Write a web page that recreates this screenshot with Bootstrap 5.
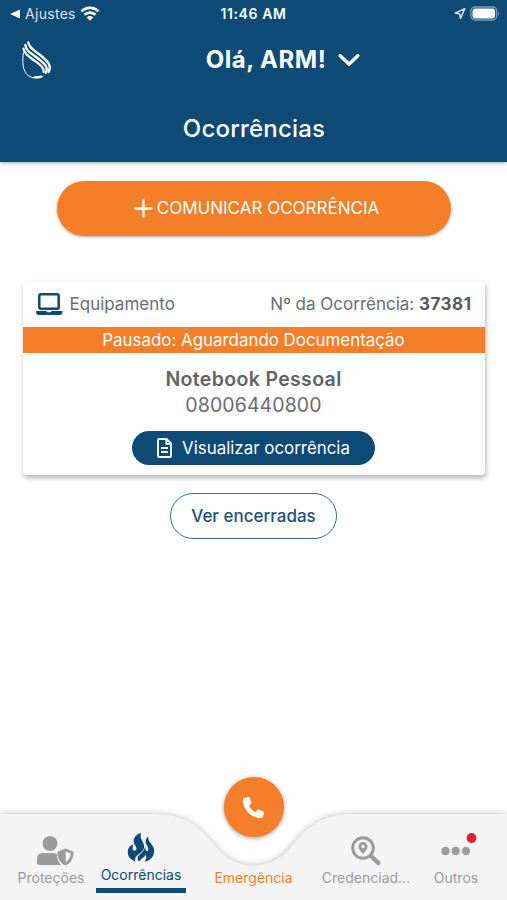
<!DOCTYPE html>
<html lang="pt-BR">
<head>
<meta charset="utf-8">
<meta name="viewport" content="width=device-width, initial-scale=1">
<title>Ocorrências</title>
<link href="https://cdn.jsdelivr.net/npm/bootstrap@5.3.0/dist/css/bootstrap.min.css" rel="stylesheet">
<style>
:root{--navy:#0d4a75;--orange:#f57f29}
body{font-family:Inter,"Liberation Sans",sans-serif;height:900px;overflow:hidden;background:#fff;color:#6b6c70}
svg{display:block;flex:none;overflow:visible}
.t{white-space:nowrap;line-height:1}
.app-header{height:162px;background:var(--navy);box-shadow:0 1px 4px rgba(0,0,0,.35)}
.status{height:28px;padding:0 7px 0 10px}
.status>div{flex:1 1 0}
.s-back{font-size:14px;letter-spacing:.3px;margin-left:5px;margin-right:4px;color:#dbe6ee}
.s-time{font-size:14px;font-weight:600;letter-spacing:.6px;margin:0 3px 0 0}
.hello-row{height:64px;padding:0 22px}
.hello-box{padding-left:29px}
.hello{font-size:24px;font-weight:700;letter-spacing:.5px}
.page-title{height:70px;font-size:24px;font-weight:500;letter-spacing:.2px;padding:3px 0 0 1px}
.btn-report{width:394px;height:55px;margin-top:19px;background:var(--orange);color:#fff;font-size:17px;box-shadow:0 1px 3px rgba(0,0,0,.35);border:0;padding:0 0 0 6px}
.claim{width:462px;height:194px;margin-top:45px;border:0;border-radius:4px;box-shadow:1px 3px 5px rgba(0,0,0,.3)}
.claim-head{height:46px;padding:0 13px 0 12px;font-size:17px}
.claim-type{padding-left:6px}
.claim-num{color:#58595d;letter-spacing:.5px}
.claim-status{height:26px;background:var(--orange);color:#fff;font-size:16.9px}
.claim-name{font-size:19.5px;font-weight:600;letter-spacing:.35px;color:#626366;margin-top:17px}
.claim-phone{font-size:19.5px;letter-spacing:.1px;margin-top:6px}
.btn-view{width:243px;height:34px;margin-top:16px;background:var(--navy);color:#fff;font-size:16.9px;border:0;padding:0;gap:10px}
.btn-closed{width:167px;height:46px;margin-top:18px;border:1.5px solid #316a91;color:#1b527c;font-size:17px;font-weight:500;padding:0}
.tabs{height:126px}
.tabs-bg{position:absolute;left:0;top:0}
.tab-row{position:absolute;left:0;right:0;top:0;bottom:0;padding:0 6px}
.tab{width:90px;padding-top:60px;color:#9b9b9b;font-size:14px}
.tab-mid{width:135px;padding-top:3px;color:var(--orange)}
.tab-on{padding-top:57px;color:var(--navy)}
.tab-on::after{content:"";width:90px;height:5px;background:var(--navy);margin-top:6px}
.tab-ico{height:32px;margin-bottom:5px}
.call{width:60px;height:60px;background:var(--orange);box-shadow:0 1px 4px rgba(0,0,0,.4);margin-bottom:34px;border:0}
</style>
<script src="https://cdn.jsdelivr.net/npm/bootstrap@5.3.0/dist/js/bootstrap.bundle.min.js"></script>
</head>
<body class="d-flex flex-column">
<header class="app-header text-white flex-shrink-0">
  <div class="status d-flex align-items-center">
    <div class="d-flex align-items-center">
      <svg width="10" height="10" viewBox="0 0 10 10"><path d="M0 5 10 .5v9z" fill="#fff"/></svg>
      <span class="s-back t">Ajustes</span>
      <svg width="20" height="15" viewBox="0 0 20 15" fill="none" stroke="#fff" stroke-width="2.7"><path d="M1.500 4.400a12 12 0 0 1 17 0M4.600 7.800a7.600 7.600 0 0 1 10.800 0"/><path d="M10 13.700 6.700 10.400a4.700 4.700 0 0 1 6.600 0z" fill="#fff" stroke="none"/></svg>
    </div>
    <span class="s-time t">11:46 AM</span>
    <div class="d-flex align-items-center justify-content-end gap-1">
      <svg width="12" height="12" viewBox="0 0 13 13" fill="none" stroke="#e6eef4" stroke-width="1.500" stroke-linejoin="round"><path d="M11.700 .700 1.300 5.500l4.900.8.8 5z"/></svg>
      <svg width="30" height="15" viewBox="0 0 30 15"><rect x=".900" y="0" width="25.800" height="13" rx="4" fill="none" stroke="#7d9cb4" stroke-width="1.300"/><rect x="2.500" y="1.500" width="22.600" height="10" rx="2.500" fill="#fff"/><path d="M28 4.200q2 2.300 0 4.600z" fill="#7d9cb4"/></svg>
    </div>
  </div>
  <div class="hello-row d-flex align-items-center">
    <svg width="30" height="38" viewBox="0 0 30 38" fill="none" stroke="#fff" stroke-linecap="round"><path stroke-width="2.300" d="M6.300 1.500C7 7 12 9 17.500 13.500 24.500 19 30.500 24 26.500 31"/><path stroke-width="2.300" d="M3.300 4C4 9.500 9 12.300 15 16.700c7 5.200 12 9.300 8.800 15"/><path stroke-width="2.200" d="M1.500 7.500C2 12.500 7 15.700 12.500 19.700 18.500 24 22.500 27 21.500 31"/><path stroke-width="1" d="M1.400 12C-.5 24 1.500 34 10 36.500c4 1 8 .5 11-1"/><path stroke-width="2" d="M12.500 36.300q4 .2 7-.800"/></svg>
    <div class="hello-box flex-fill d-flex align-items-center justify-content-center">
      <span class="hello t">Olá, ARM!</span>
      <svg class="ms-2 ps-1" width="26" height="14" viewBox="0 0 22 14" fill="none" stroke="#fff" stroke-width="3.400" stroke-linecap="round"><path d="m2.200 2.700 8.800 8.500 8.800-8.500"/></svg>
    </div>
  </div>
  <div class="page-title t d-flex align-items-center justify-content-center"><span>Ocorrências</span></div>
</header>

<main class="flex-fill d-flex flex-column align-items-center">
  <button class="btn btn-report rounded-pill d-flex align-items-center justify-content-center t">
    <svg class="me-1" width="19" height="19" viewBox="0 0 19 19" stroke="#fff" stroke-width="2.300" stroke-linecap="round"><path d="M9.500 1.500v16M1.500 9.500h16"/></svg>
    <span>COMUNICAR OCORRÊNCIA</span>
  </button>

  <section class="card claim">
    <div class="claim-head d-flex align-items-center justify-content-between t">
      <div class="d-flex align-items-center">
        <svg width="29" height="24" viewBox="0 0 29 24"><rect x="4.300" y="2.300" width="19.400" height="14.400" rx="1.500" fill="none" stroke="#0d4a75" stroke-width="2.500"/><path d="M1 19h10.500q.3 1.300 1.500 1.300h2q1.200 0 1.500-1.300H27.500v1q0 3-3 3H4q-3 0-3-3z" fill="#0d4a75"/></svg>
        <span class="claim-type">Equipamento</span>
      </div>
      <span>Nº da Ocorrência: <strong class="claim-num">37381</strong></span>
    </div>
    <div class="claim-status d-flex align-items-center justify-content-center t"><span>Pausado: Aguardando Documentação</span></div>
    <div class="d-flex flex-column align-items-center">
      <span class="claim-name t">Notebook Pessoal</span>
      <span class="claim-phone t">08006440800</span>
      <button class="btn btn-view rounded-pill d-flex align-items-center justify-content-center t">
        <svg width="15" height="20" viewBox="0 0 15 20" fill="none" stroke="#fff" stroke-width="1.800" stroke-linejoin="round"><path d="M2 1h7.500L14 5.500V18q0 1-1 1H2q-1 0-1-1V2q0-1 1-1zM9.300 1v4.900H14M4 10h7M4 14h7"/></svg>
        <span>Visualizar ocorrência</span>
      </button>
    </div>
  </section>

  <button class="btn btn-closed rounded-pill d-flex align-items-center justify-content-center t"><span>Ver encerradas</span></button>
</main>

<nav class="tabs position-relative flex-shrink-0">
  <svg class="tabs-bg" width="507" height="126" viewBox="0 0 507 126"><defs><filter id="soft" x="-10%" y="-20%" width="120%" height="140%"><feGaussianBlur stdDeviation="3.500"/></filter></defs><path d="M0 40H155C190 40 203 58 218 75C237 97 270 97 289 75C304 58 317 40 352 40H507V126H0z" fill="#000" opacity=".28" filter="url(#soft)"/><path d="M0 40H155C190 40 203 58 218 75C237 97 270 97 289 75C304 58 317 40 352 40H507V126H0z" fill="#f4f4f4"/></svg>
  <div class="tab-row d-flex">
    <div class="tab d-flex flex-column align-items-center t">
      <div class="tab-ico d-flex align-items-center"><svg class="ms-2" width="38" height="32" viewBox="0 0 38 32" fill="#9b9b9b"><circle cx="14" cy="9.500" r="7.500"/><path d="M7 19h10.500q3 0 3.500 1.500c0 4 1.500 8 4 10.500H3q-2 0-2-2V25q0-6 6-6z"/><path fill-rule="evenodd" d="m29.500 14.500 8 3.200c.3 6-2.500 11.300-8 13.800-5.500-2.500-8.300-7.800-8-13.800zm.2 3v10.700c3.200-2 4.900-5 5-8.700z"/></svg></div>
      <span>Proteções</span>
    </div>
    <div class="tab tab-on d-flex flex-column align-items-center t">
      <div class="tab-ico d-flex align-items-center"><svg width="28" height="32" viewBox="0 0 28 32" fill="#0d4a75"><path d="M14 1.500C6 5 5 10.500 8.500 15c1.600 2.300 1.200 4.600-.8 4.600-2.200 0-2.700-2.400-1.200-6.100C2.500 14.500.8 17.500.8 21c0 4.700 3 8 7.700 9.500-1-3.500.5-5.300 3.500-7.500 4.500-3.300 6.200-6 4.500-10.500C15.200 9 12.500 6.500 14 1.500z"/><path d="M21.200 5.500c-3 3-3.200 5.800-1.200 9 1.800 2.800 1.700 5.500 0 5.500-1.300 0-1.700-1.500-1.700-4.500-.8 3.500-3 6-5.800 8.300-2.500 2.200-2.500 4.700-.3 6.900.6-1.700 2-2.700 3.500-3.700 2-1.300 2.600-2.400 2.600-3.800 1.700 2.500 1.200 5-.8 7.800 6-1.500 9.700-5.500 9.700-11.500 0-6-6.700-8-6-14z"/></svg></div>
      <span>Ocorrências</span>
    </div>
    <div class="tab tab-mid d-flex flex-column align-items-center t">
      <button class="call rounded-circle d-flex align-items-center justify-content-center p-0"><svg width="21" height="21" viewBox="0 0 512 512" fill="#fff"><path d="M164.900 24.600c-7.700-18.600-28-28.500-47.400-23.200l-88 24C12.100 30.200 0 46 0 64c0 247.400 200.600 448 448 448 18 0 33.800-12.100 38.600-29.500l24-88c5.300-19.400-4.600-39.700-23.200-47.400l-96-40c-16.300-6.800-35.200-2.100-46.300 11.600L304.700 368C234.300 334.700 177.300 277.700 144 207.300l49.300-40.400c13.700-11.200 18.400-30 11.600-46.300z"/></svg></button>
      <span>Emergência</span>
    </div>
    <div class="tab d-flex flex-column align-items-center t">
      <div class="tab-ico d-flex align-items-center"><svg width="32" height="32" viewBox="0 0 32 32"><circle cx="13" cy="14" r="10.300" fill="none" stroke="#9b9b9b" stroke-width="3"/><path d="m21 22 7.300 7" stroke="#9b9b9b" stroke-width="4.500" stroke-linecap="round"/><path fill="#9b9b9b" fill-rule="evenodd" d="M13 8a4.500 4.500 0 0 1 4.500 4.500c0 2.300-2 4.500-4.500 7.500-2.500-3-4.500-5.200-4.500-7.500A4.500 4.500 0 0 1 13 8zm0 2.800a1.800 1.800 0 1 0 0 3.600 1.800 1.800 0 0 0 0-3.600z"/></svg></div>
      <span>Credenciad...</span>
    </div>
    <div class="tab d-flex flex-column align-items-center t">
      <div class="tab-ico d-flex align-items-center"><svg width="42" height="32" viewBox="0 0 42 32" fill="#9b9b9b"><circle cx="10.500" cy="17" r="4.200"/><circle cx="20.700" cy="17" r="4.200"/><circle cx="31" cy="17" r="4.200"/><circle cx="36.500" cy="4" r="4.900" fill="#e51d36"/></svg></div>
      <span>Outros</span>
    </div>
  </div>
</nav>
</body>
</html>
